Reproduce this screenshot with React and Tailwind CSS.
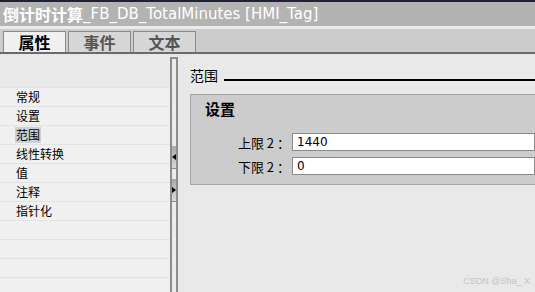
import React from "react";

const font = { fontFamily: '"Noto Sans CJK SC", "Liberation Sans", sans-serif' };

function Row({ children, selected }) {
  return (
    <div className="h-[19px] shrink-0 border-b border-[#e3e3e3] bg-[#f0f0f0] flex items-center pl-[16px] text-[12px] text-black leading-none">
      {children ? (
        <span className={selected ? "bg-[#c9d1d9] px-[1px] py-[2px] -ml-[1px]" : ""}>{children}</span>
      ) : null}
    </div>
  );
}

export default function App() {
  const items = ["常规", "设置", "范围", "线性转换", "值", "注释", "指针化", "", "", "", ""];
  return (
    <div className="w-[535px] h-[292px] overflow-hidden bg-[#e9e9e9] flex flex-col relative" style={font}>
      <div className="h-[2px] shrink-0 bg-[#1f2233]" />
      <div className="h-[24px] shrink-0 bg-[#b3b3b3] flex items-center pl-[3px] text-white text-[16px] font-bold whitespace-nowrap leading-none">
        <span>倒计时计算</span>
        <span className="font-normal" style={{ fontFamily: '"DejaVu Sans", sans-serif', fontSize: 15 }}>_FB_DB_TotalMinutes [HMI_Tag]</span>
      </div>
      <div className="h-[3px] shrink-0 bg-[#ebebeb]" />
      <div className="h-[25px] shrink-0 bg-[#cccccc] border-b-2 border-[#6a6a6a] flex items-end pl-[3px] gap-[2px]">
        <div className="w-[63px] h-[21px] bg-[#f0f0f0] border border-b-0 border-[#8a8a8a] flex items-center justify-center text-[16px] font-bold text-black leading-none">属性</div>
        <div className="w-[63px] h-[21px] bg-[#d6d6d6] border border-b-0 border-[#8a8a8a] flex items-center justify-center text-[16px] font-bold text-[#555] leading-none">事件</div>
        <div className="w-[63px] h-[21px] bg-[#d6d6d6] border border-b-0 border-[#8a8a8a] flex items-center justify-center text-[16px] font-bold text-[#555] leading-none">文本</div>
      </div>
      <div className="flex-1 min-h-0 flex">
        <div className="w-[170px] flex flex-col">
          <div className="h-[34px] shrink-0 bg-[#e9e9e9] border-b border-[#e3e3e3]" />
          {items.map((t, i) => (
            <Row key={i} selected={t === "范围"}>{t}</Row>
          ))}
        </div>
        <div className="w-[8px] pt-[3px] flex flex-col">
          <div className="flex-1 border-x-2 border-t-2 border-[#8c8c8c] bg-[#ececec] flex flex-col">
            <div className="h-[87px] shrink-0" />
            <div className="h-[23px] shrink-0 bg-gradient-to-b from-[#a9a9a9] to-[#d9d9d9] border-b border-[#8c8c8c] flex items-center justify-center">
              <svg width="4" height="6" viewBox="0 0 4 6"><path d="M0 3 L4 0 L4 6 Z" fill="#000" /></svg>
            </div>
            <div className="h-[10px] shrink-0" />
            <div className="h-[23px] shrink-0 bg-gradient-to-b from-[#a9a9a9] to-[#d9d9d9] border-b border-[#8c8c8c] flex items-center justify-center">
              <svg width="4" height="6" viewBox="0 0 4 6"><path d="M4 3 L0 0 L0 6 Z" fill="#000" /></svg>
            </div>
          </div>
        </div>
        <div className="flex-1 pl-[12px] pt-[12px] flex flex-col">
          <div className="flex items-end h-[16px] mb-[12px] shrink-0">
            <span className="text-[14px] leading-none text-black">范围</span>
            <div className="flex-1 ml-[6px] mb-[1px] border-b-2 border-black" />
          </div>
          <div className="h-[91px] shrink-0 bg-[#cccccc] border border-r-0 border-[#a6a6a6] pl-[14px] pt-[4px]">
            <div className="text-[15px] font-bold text-black leading-[20px]">设置</div>
            <div className="mt-[14px] flex items-center h-[18px]">
              <div className="w-[87px] text-right text-[13px] text-black leading-none pr-[2px]">上限 2 ：</div>
              <div className="flex-1 h-[18px] bg-white border border-[#8a8a8a] flex items-center pl-[4px] text-[12px] text-black" style={{ fontFamily: '"DejaVu Sans", sans-serif' }}>1440</div>
            </div>
            <div className="mt-[6px] flex items-center h-[18px]">
              <div className="w-[87px] text-right text-[13px] text-black leading-none pr-[2px]">下限 2 ：</div>
              <div className="flex-1 h-[18px] bg-white border border-[#8a8a8a] flex items-center pl-[4px] text-[12px] text-black" style={{ fontFamily: '"DejaVu Sans", sans-serif' }}>0</div>
            </div>
          </div>
        </div>
      </div>
      <div className="absolute right-[5px] bottom-[6px] text-[9px] text-[#c4c4c4] leading-none" style={{ fontFamily: '"Liberation Sans", sans-serif' }}>CSDN @Sha_ X</div>
    </div>
  );
}
